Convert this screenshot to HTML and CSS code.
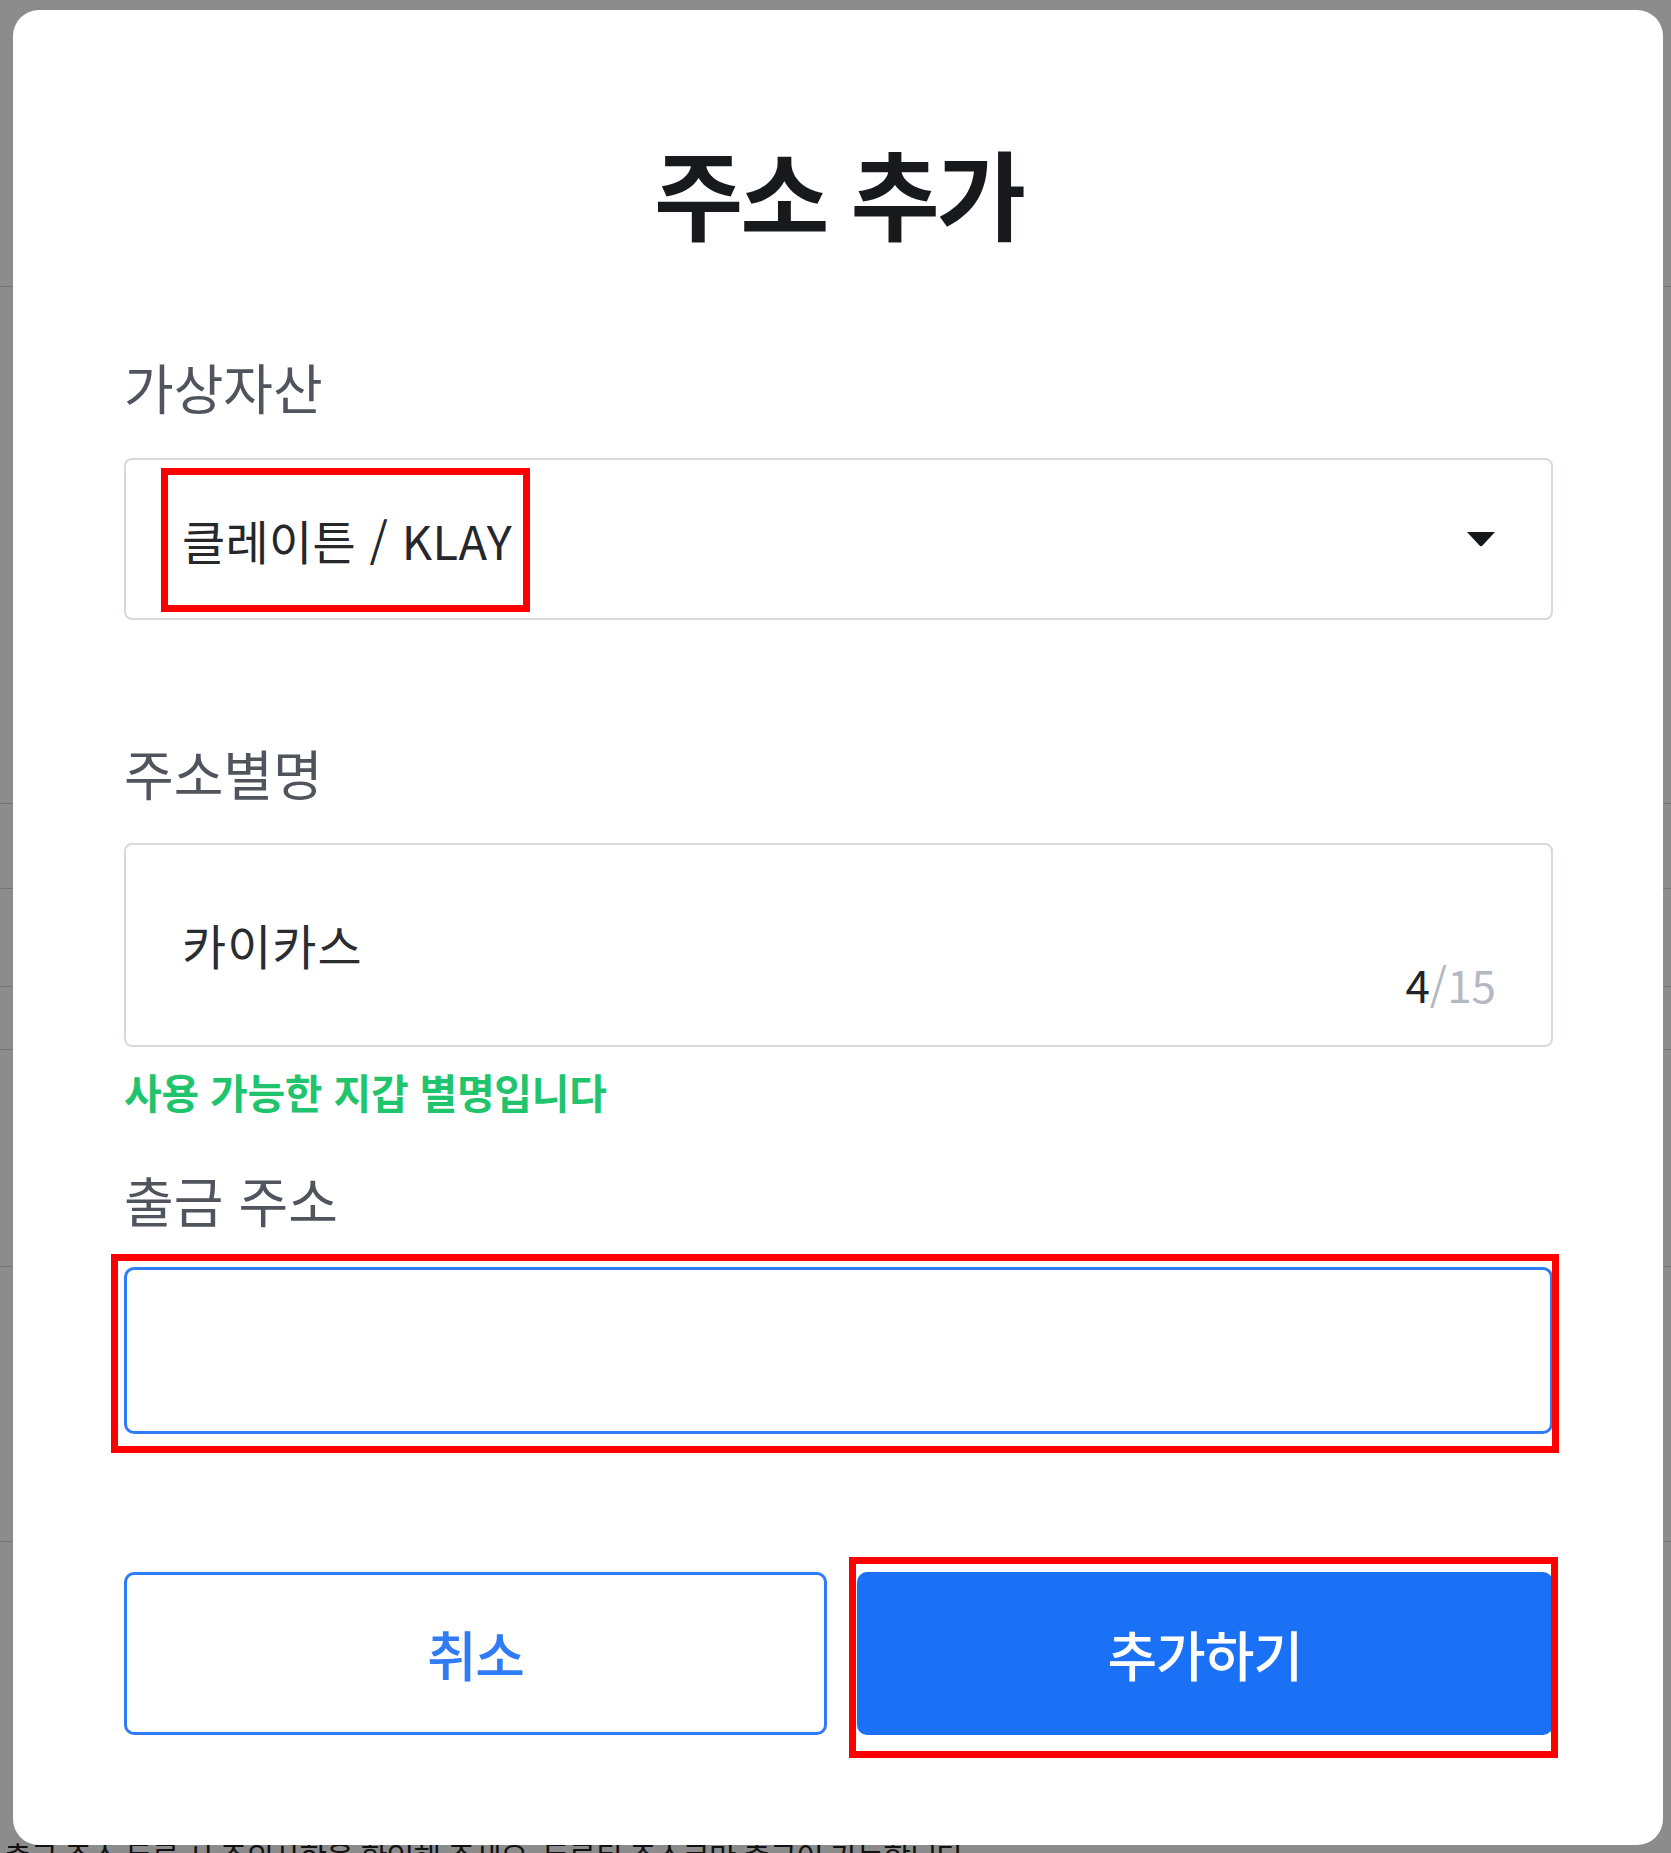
FILE: index.html
```html
<!DOCTYPE html>
<html lang="ko">
<head>
    <meta charset="UTF-8">
    <meta name="viewport" content="width=device-width, initial-scale=1.0">
    <title>주소 추가</title>
    <link rel="stylesheet" href="styles.css">
</head>
<body>
    <div class="page">
        <div class="page-row"></div>
        <div class="page-row"></div>
        <div class="page-row"></div>
        <div class="page-row"></div>
        <div class="page-row"></div>
        <div class="page-row"></div>
        <div class="page-row"></div>
        <div class="page-foot">출금 주소 등록 시 주의사항을 확인해 주세요. 등록된 주소로만 출금이 가능합니다.</div>
    </div>

    <div class="dim"></div>

    <div class="modal">
        <h1 class="modal-title">주소 추가</h1>

        <div class="field-label">가상자산</div>
        <div class="select-box">
            <span class="select-value">클레이튼 / KLAY</span>
            <svg class="caret" width="30" height="16" viewBox="0 0 30 16">
                <path d="M1 1 L29 1 L16.5 14.5 Q15 16 13.5 14.5 Z" fill="#16181c"/>
            </svg>
        </div>

        <div class="field-label label-gap">주소별명</div>
        <div class="text-box nickname-box">
            <span class="text-value">카이카스</span>
            <span class="counter"><span class="count-now">4</span>/15</span>
        </div>
        <div class="helper-ok">사용 가능한 지갑 별명입니다</div>

        <div class="field-label label-gap-sm">출금 주소</div>
        <div class="text-box address-box"></div>

        <div class="actions">
            <button class="btn btn-cancel">취소</button>
            <button class="btn btn-submit">추가하기</button>
        </div>

        <!-- review annotations -->
        <div class="mark mark-asset"></div>
        <div class="mark mark-address"></div>
        <div class="mark mark-submit"></div>
    </div>
</body>
</html>
```

FILE: styles.css
```css
* {
    box-sizing: border-box;
}
html, body {
    margin: 0;
    height: 100%;
}
body {
    font-family: "Noto Sans CJK KR", "Noto Sans", sans-serif;
    background-color: #ffffff;
    overflow: hidden;
    position: relative;
}
.page {
    padding-top: 286px;
    height: 100%;
}
.page-row {
    height: 1px;
    background-color: #cfd2d6;
}
.page-row:nth-child(1) { margin-top: 0; }
.page-row:nth-child(2) { margin-top: 516px; }
.page-row:nth-child(3) { margin-top: 84px; }
.page-row:nth-child(4) { margin-top: 97px; }
.page-row:nth-child(5) { margin-top: 62px; }
.page-row:nth-child(6) { margin-top: 216px; }
.page-row:nth-child(7) { margin-top: 274px; }
.page-foot {
    margin-top: 295px;
    padding-left: 4px;
    font-size: 30px;
    line-height: 1.2;
    color: #222;
    letter-spacing: -1px;
}
.dim {
    position: absolute;
    inset: 0;
    background-color: rgba(0, 0, 0, 0.45);
}
.modal {
    position: absolute;
    left: 13px;
    top: 10px;
    width: 1650px;
    height: 1835px;
    background-color: #ffffff;
    border-radius: 26px;
    padding: 132px 110px 0 111px;
    display: flex;
    flex-direction: column;
}
.modal-title {
    margin: 0;
    font-size: 97px;
    line-height: 1;
    font-weight: 700;
    color: #17191d;
    text-align: center;
    letter-spacing: -3px;
}
.field-label {
    margin-top: 121px;
    font-size: 54px;
    line-height: 1;
    color: #50555d;
    letter-spacing: 0;
}
.label-gap {
    margin-top: 126px;
}
.label-gap-sm {
    margin-top: 61px;
}
.select-box {
    margin-top: 44px;
    height: 162px;
    border: 2px solid #d6d9de;
    border-radius: 8px;
    display: flex;
    align-items: center;
    justify-content: space-between;
    padding: 0 55px 0 56px;
}
.select-value {
    font-size: 47px;
    color: #25272b;
    letter-spacing: 0.3px;
}
.caret {
    display: block;
}
.text-box {
    margin-top: 43px;
    border: 2px solid #d6d9de;
    border-radius: 8px;
}
.nickname-box {
    height: 204px;
    display: flex;
    align-items: center;
    justify-content: space-between;
    padding: 0 55px 0 56px;
    position: relative;
}
.text-value {
    font-size: 48px;
    color: #2a2c30;
    letter-spacing: 1px;
    margin-top: -2px;
}
.counter {
    position: absolute;
    right: 55px;
    bottom: 29px;
    font-size: 44px;
    color: #b4b9c1;
}
.count-now {
    color: #222428;
}
.helper-ok {
    margin-top: 24px;
    font-size: 41px;
    line-height: 1;
    font-weight: 700;
    color: #1fc46c;
    letter-spacing: -0.3px;
}
.address-box {
    margin-top: 40px;
    height: 167px;
    border: 3px solid #2f7cf6;
    border-radius: 10px;
}
.actions {
    margin-top: 138px;
    display: flex;
    gap: 30px;
}
.btn {
    flex: 1;
    height: 163px;
    border-radius: 10px;
    font-family: inherit;
    font-size: 54px;
    font-weight: 500;
    letter-spacing: -1.5px;
    cursor: pointer;
}
.btn-cancel {
    background-color: #ffffff;
    border: 3px solid #2f7cf6;
    color: #2f7cf6;
}
.btn-submit {
    background-color: #1a71f6;
    border: none;
    color: #ffffff;
    letter-spacing: -1px;
}
.mark {
    position: absolute;
    border: 7px solid #ff0000;
}
.mark-asset {
    left: 148px;
    top: 458px;
    width: 369px;
    height: 144px;
}
.mark-address {
    left: 98px;
    top: 1244px;
    width: 1448px;
    height: 199px;
}
.mark-submit {
    left: 836px;
    top: 1547px;
    width: 709px;
    height: 201px;
}
```
